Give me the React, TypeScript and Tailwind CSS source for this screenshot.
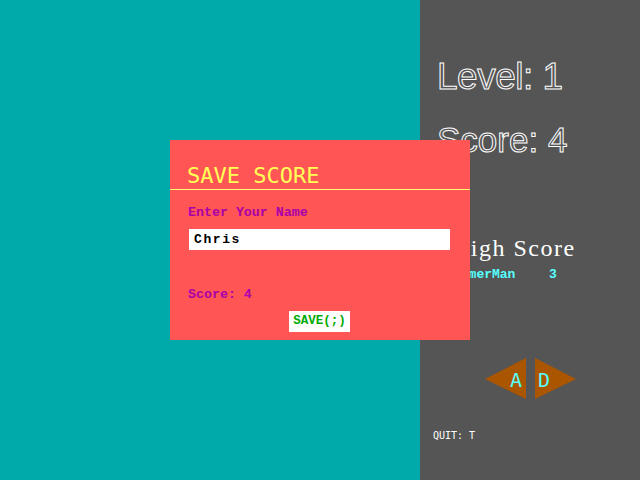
import React from 'react';

const mono = "font-['Liberation_Mono','DejaVu_Sans_Mono',monospace]";
const dejamono = "font-['DejaVu_Sans_Mono','Liberation_Mono',monospace]";

const SaveDialog: React.FC = () => {
  return (
    <div className="absolute left-[170px] top-[140px] w-[300px] h-[200px] bg-[#FF5555] flex flex-col">
      <div className={`${dejamono} text-[22px] leading-[22px] text-[#FFFF55] pl-[17px] pt-[25px]`}>SAVE SCORE</div>
      <div className="h-px bg-[#FFFF77] mt-[2px]"></div>
      <div className="px-[19px] pt-[16px]">
        <div className={`${mono} font-bold text-[13.3px] leading-[13px] text-[#AA00AA] -ml-[1px]`}>Enter Your Name</div>
        <div className="mt-[10px] h-[21px] w-[261px] bg-white flex items-center pl-[5px]">
          <span className={`${mono} font-bold text-[13px] tracking-[1.6px] text-black`}>Chris</span>
        </div>
        <div className={`${mono} font-bold text-[13.3px] leading-[13px] text-[#AA00AA] mt-[38px] -ml-[1px]`}>Score: 4</div>
        <div className="mt-[5px] ml-[100px]">
          <button className={`${mono} font-bold text-[12.5px] leading-[21px] h-[21px] w-[61px] bg-white text-[#00AA00]`}>SAVE(;)</button>
        </div>
      </div>
    </div>
  );
};

const SidePanel: React.FC = () => {
  return (
    <div className="w-[220px] h-full bg-[#555555] flex flex-col pl-[17px]">
      <div className="mt-[57px] font-['Liberation_Sans',Arial,sans-serif] text-[37px] leading-[40px] text-transparent [-webkit-text-stroke:1px_white] tracking-[-0.5px]">Level: 1</div>
      <div className="mt-[23px] font-['Liberation_Sans',Arial,sans-serif] text-[35px] leading-[40px] text-transparent [-webkit-text-stroke:1px_white] tracking-[0px]">Score: 4</div>
      <div className="mt-[76px] ml-[15px] font-['Liberation_Serif','Times_New_Roman',serif] text-[24px] leading-[24px] tracking-[1.5px] text-white">High Score</div>
      <div className={`${mono} font-bold text-[13px] leading-[13px] text-[#55FFFF] mt-[8px] flex`}>
        <span className="w-[112px] pl-[16px]">GamerMan</span>
        <span>3</span>
      </div>
      <div className="mt-[77px] ml-[48px] flex items-center gap-[9px]">
        <div className="relative w-[41px] h-[41px]">
          <svg width="41" height="41" viewBox="0 0 41 41" className="absolute inset-0">
            <polygon points="0,21 41,0 41,41" fill="#AA5500" />
          </svg>
          <span className={`absolute left-[25px] top-[12px] ${dejamono} text-[20px] leading-[20px] text-[#55FFFF]`}>A</span>
        </div>
        <div className="relative w-[41px] h-[41px]">
          <svg width="41" height="41" viewBox="0 0 41 41" className="absolute inset-0">
            <polygon points="0,0 41,21 0,41" fill="#AA5500" />
          </svg>
          <span className={`absolute left-[3px] top-[12px] ${dejamono} text-[20px] leading-[20px] text-[#55FFFF]`}>D</span>
        </div>
      </div>
      <div className={`${dejamono} text-[10px] leading-[10px] text-white mt-[32px] -ml-[4px]`}>QUIT: T</div>
    </div>
  );
};

const App: React.FC = () => {
  return (
    <div className="relative w-[640px] h-[480px] flex overflow-hidden">
      <div className="w-[420px] h-full bg-[#00AAAA]"></div>
      <SidePanel />
      <SaveDialog />
    </div>
  );
};

export default App;
